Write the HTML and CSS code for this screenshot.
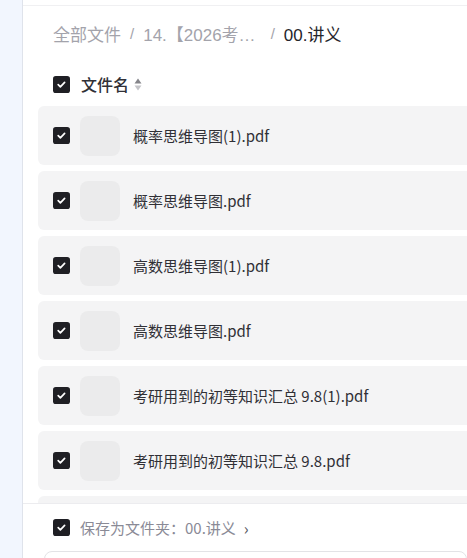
FILE: index.html
```html
<!DOCTYPE html>
<html lang="zh-CN">
<head>
    <meta charset="UTF-8">
    <meta name="viewport" content="width=device-width, initial-scale=1.0">
    <title>保存文件</title>
    <link rel="stylesheet" href="styles.css">
</head>
<body>
    <div class="layout">
        <div class="sidebar"></div>
        <div class="main">
            <div class="topbar"></div>
            <div class="breadcrumb">
                <span class="crumb">全部文件</span>
                <span class="sep">/</span>
                <span class="crumb folded">14.【2026考…</span>
                <span class="sep">/</span>
                <span class="crumb current">00.讲义</span>
            </div>
            <div class="list-head">
                <span class="check"><svg viewBox="0 0 18 18"><rect width="18" height="18" rx="3" fill="#1f1f24"/><path d="M5.5 9.2l2.3 2.3 4.5-4.8" fill="none" stroke="#fff" stroke-width="1.8" stroke-linecap="round" stroke-linejoin="round"/></svg></span>
                <span class="head-title">文件名</span>
                <svg class="sort" viewBox="0 0 8 13"><path d="M4 0.5L7.5 5.5H0.5z" fill="#85858a"/><path d="M4 12.5L7.5 7.5H0.5z" fill="#c4c4c8"/></svg>
            </div>
            <div class="list">
                <div class="row">
                    <span class="check"><svg viewBox="0 0 18 18"><rect width="18" height="18" rx="3" fill="#1f1f24"/><path d="M5.5 9.2l2.3 2.3 4.5-4.8" fill="none" stroke="#fff" stroke-width="1.8" stroke-linecap="round" stroke-linejoin="round"/></svg></span>
                    <div class="thumb"></div>
                    <span class="name">概率思维导图(1).pdf</span>
                </div>
                <div class="row">
                    <span class="check"><svg viewBox="0 0 18 18"><rect width="18" height="18" rx="3" fill="#1f1f24"/><path d="M5.5 9.2l2.3 2.3 4.5-4.8" fill="none" stroke="#fff" stroke-width="1.8" stroke-linecap="round" stroke-linejoin="round"/></svg></span>
                    <div class="thumb"></div>
                    <span class="name">概率思维导图.pdf</span>
                </div>
                <div class="row">
                    <span class="check"><svg viewBox="0 0 18 18"><rect width="18" height="18" rx="3" fill="#1f1f24"/><path d="M5.5 9.2l2.3 2.3 4.5-4.8" fill="none" stroke="#fff" stroke-width="1.8" stroke-linecap="round" stroke-linejoin="round"/></svg></span>
                    <div class="thumb"></div>
                    <span class="name">高数思维导图(1).pdf</span>
                </div>
                <div class="row">
                    <span class="check"><svg viewBox="0 0 18 18"><rect width="18" height="18" rx="3" fill="#1f1f24"/><path d="M5.5 9.2l2.3 2.3 4.5-4.8" fill="none" stroke="#fff" stroke-width="1.8" stroke-linecap="round" stroke-linejoin="round"/></svg></span>
                    <div class="thumb"></div>
                    <span class="name">高数思维导图.pdf</span>
                </div>
                <div class="row">
                    <span class="check"><svg viewBox="0 0 18 18"><rect width="18" height="18" rx="3" fill="#1f1f24"/><path d="M5.5 9.2l2.3 2.3 4.5-4.8" fill="none" stroke="#fff" stroke-width="1.8" stroke-linecap="round" stroke-linejoin="round"/></svg></span>
                    <div class="thumb"></div>
                    <span class="name">考研用到的初等知识汇总 9.8(1).pdf</span>
                </div>
                <div class="row">
                    <span class="check"><svg viewBox="0 0 18 18"><rect width="18" height="18" rx="3" fill="#1f1f24"/><path d="M5.5 9.2l2.3 2.3 4.5-4.8" fill="none" stroke="#fff" stroke-width="1.8" stroke-linecap="round" stroke-linejoin="round"/></svg></span>
                    <div class="thumb"></div>
                    <span class="name">考研用到的初等知识汇总 9.8.pdf</span>
                </div>
                <div class="row">
                    <span class="check"><svg viewBox="0 0 18 18"><rect width="18" height="18" rx="3" fill="#1f1f24"/><path d="M5.5 9.2l2.3 2.3 4.5-4.8" fill="none" stroke="#fff" stroke-width="1.8" stroke-linecap="round" stroke-linejoin="round"/></svg></span>
                    <div class="thumb"></div>
                    <span class="name">数学公式手册.pdf</span>
                </div>
            </div>
            <div class="footer">
                <div class="save-as">
                    <span class="check"><svg viewBox="0 0 18 18"><rect width="18" height="18" rx="3" fill="#1f1f24"/><path d="M5.5 9.2l2.3 2.3 4.5-4.8" fill="none" stroke="#fff" stroke-width="1.8" stroke-linecap="round" stroke-linejoin="round"/></svg></span>
                    <span class="save-text">保存为文件夹：00.讲义</span>
                    <span class="arrow">›</span>
                </div>
                <div class="input-box"></div>
            </div>
        </div>
    </div>
</body>
</html>
```

FILE: styles.css
```css
body {
    margin: 0;
    font-family: 'Noto Sans CJK SC', 'Noto Sans', sans-serif;
    background: #fff;
    overflow: hidden;
}
.layout {
    display: flex;
    height: 558px;
}
.sidebar {
    width: 22px;
    flex-shrink: 0;
    background: #f2f6fe;
    border-right: 1px solid #dfe3eb;
}
.main {
    flex: 1;
    display: flex;
    flex-direction: column;
    overflow: hidden;
    min-width: 0;
}
.topbar {
    height: 5px;
    flex-shrink: 0;
    border-bottom: 1px solid #f0f0f2;
}
.breadcrumb {
    display: flex;
    align-items: center;
    height: 48px;
    padding-left: 30px;
    margin-top: 3px;
    font-family: 'Liberation Sans', 'Noto Sans CJK SC', sans-serif;
    font-size: 17px;
    color: #a3a3ab;
    white-space: nowrap;
}
.sep {
    margin: 0 9px;
    font-size: 15px;
}
.folded {
    margin-right: 6px;
}
.current {
    color: #25252b;
}
.list-head {
    display: flex;
    align-items: center;
    height: 34px;
    padding-left: 30px;
    margin-top: 10px;
}
.check {
    width: 17px;
    height: 17px;
    flex-shrink: 0;
    display: flex;
}
.check svg {
    width: 17px;
    height: 17px;
}
.head-title {
    margin-left: 11px;
    font-size: 16px;
    font-weight: 500;
    color: #303036;
}
.sort {
    width: 8px;
    height: 13px;
    margin-left: 5px;
}
.list {
    flex: 1;
    padding: 5px 0 0 15px;
    margin-right: -20px;
    overflow: hidden;
}
.row {
    display: flex;
    align-items: center;
    height: 59px;
    margin-bottom: 6px;
    padding-left: 15px;
    background: #f4f4f5;
    border-radius: 6px;
}
.thumb {
    width: 40px;
    height: 40px;
    margin-left: 10px;
    border-radius: 8px;
    background: #ebebec;
}
.name {
    margin-left: 13px;
    font-size: 15px;
    color: #303036;
}
.footer {
    flex-shrink: 0;
    height: 54px;
    border-top: 1px solid #ececef;
    background: #fff;
    padding-left: 30px;
}
.save-as {
    display: flex;
    align-items: center;
    height: 47px;
    line-height: 22px;
}
.save-text {
    margin-left: 10px;
    font-size: 15px;
    color: #8a8a96;
}
.arrow {
    margin-left: 8px;
    font-size: 16px;
    color: #55555c;
}
.input-box {
    height: 20px;
    margin-left: -9px;
    border: 1px solid #e3e3e6;
    border-radius: 8px;
}
```
